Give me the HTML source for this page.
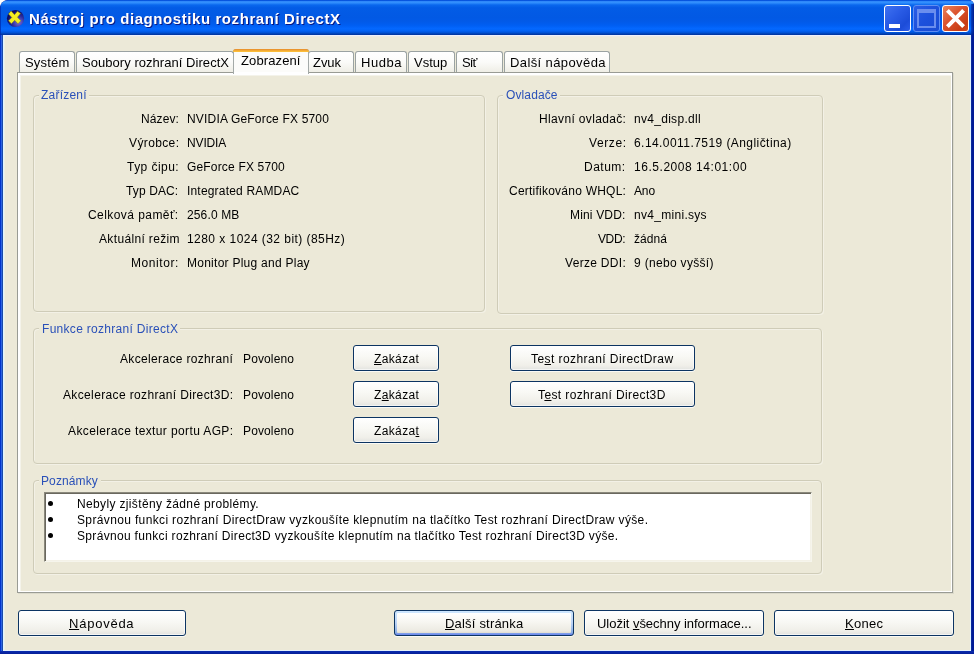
<!DOCTYPE html>
<html lang="cs"><head><meta charset="utf-8"><title>Nástroj pro diagnostiku rozhraní DirectX</title>
<style>
html,body{margin:0;padding:0;}
body{width:974px;height:654px;position:relative;overflow:hidden;background:#fff;font-family:"Liberation Sans",sans-serif;}
.a{position:absolute;box-sizing:border-box;}
.t{will-change:transform;position:absolute;white-space:pre;line-height:20px;height:20px;color:#000;font-family:"Liberation Sans",sans-serif;}
.t u{text-decoration:underline;text-underline-offset:1px;}
#win{left:0;top:0;width:974px;height:654px;background:#0a2aa8;border-radius:8px 5px 0 0;overflow:hidden;}
#title{left:0;top:0;width:974px;height:35px;border-radius:8px 5px 0 0;
background:linear-gradient(to bottom,#0046c8 0%,#0a5be8 2%,#3a96ff 5%,#2a88fb 9%,#0a68ee 14%,#035ce6 22%,#0259e4 50%,#025ae8 62%,#005ef2 72%,#0468ff 82%,#0262f4 88%,#0052d8 93%,#0040b0 97%,#00309a 100%);}
#client{left:3px;top:35px;width:968px;height:615px;background:#ece9d8;}
.btn{border:1px solid #0c3462;border-radius:3px;background:linear-gradient(to bottom,#ffffff 0%,#f8f8f4 45%,#f0efe9 82%,#e2e3e0 100%);box-shadow:inset 0 0 0 1px rgba(255,255,255,.6), 0 1px 0 rgba(255,255,255,.75);}
.btn.def{background:linear-gradient(to bottom,#cee7ff 0%,#bcd4f6 50%,#89ade4 90%,#6982ee 100%);box-shadow:0 1px 0 rgba(255,255,255,.75);}
.btn.def i{position:absolute;left:2px;top:2px;right:2px;bottom:2px;border-radius:1px;background:linear-gradient(to bottom,#ffffff 0%,#f7f6f1 45%,#eceae2 90%,#e0dcd2 100%);}
.grp{border:1px solid #cfccb8;border-radius:4px;box-shadow:inset 1px 1px 0 #f3f1e6, 1px 1px 0 #f3f1e6;}
.glm{background:#ece9d8;height:4px;}
.tab{border:1px solid #9aa2a2;border-bottom:none;border-radius:3px 3px 0 0;background:linear-gradient(to bottom,#ffffff 0%,#fbfbf9 50%,#efeee6 100%);}
.cap{border:1px solid #fff;border-radius:3px;}
</style></head><body>
<div id="win" class="a">
 <div id="title" class="a"></div>
  <!-- frame borders + inner highlight -->
 <div class="a" style="left:0;top:35px;width:3px;height:619px;background:linear-gradient(to right,#0033cc 0,#0033cc 1px,#2c62e2 1px,#2c62e2 2px,#1a4aa8 2px)"></div>
 <div class="a" style="left:971px;top:35px;width:3px;height:619px;background:linear-gradient(to right,#0a2a9c 0,#0a2a9c 1px,#001a98 1px)"></div>
 <div class="a" style="left:0;top:651px;width:974px;height:3px;background:linear-gradient(to bottom,#0a2cb0,#061e96)"></div>
 <div class="a" style="left:3px;top:35px;width:968px;height:616px;background:#ece9d8"></div>
 <div class="a" style="left:3px;top:35px;width:968px;height:1px;background:#eef0fb"></div>
 <div class="a" style="left:3px;top:36px;width:968px;height:1px;background:#ebe9e4"></div>
 <div class="a" style="left:3px;top:35px;width:1px;height:616px;background:#dff4ff"></div>
 <div class="a" style="left:4px;top:36px;width:1px;height:614px;background:#ecefe6"></div>
 <div class="a" style="left:970px;top:35px;width:1px;height:616px;background:#e0f2ff"></div>
 <div class="a" style="left:3px;top:650px;width:968px;height:1px;background:#e4f0fa"></div>
 <div class="a" style="left:971px;top:4px;width:3px;height:31px;background:linear-gradient(to right,rgba(0,40,160,.55),rgba(0,20,130,.9))"></div>
 <div class="a" style="left:0;top:6px;width:1px;height:29px;background:rgba(0,40,170,.7)"></div>
 <!-- title icon -->
 <svg class="a" style="left:6px;top:9px" width="19" height="19" viewBox="0 0 19 19">
  <defs><radialGradient id="ig" cx="68%" cy="72%" r="70%"><stop offset="0" stop-color="#7a6ee0"/><stop offset=".55" stop-color="#2a2a9a"/><stop offset="1" stop-color="#0a0a5e"/></radialGradient></defs>
  <circle cx="9.5" cy="9.5" r="8.6" fill="url(#ig)"/>
  <path d="M5.09 1.98 L8.53 5.67 L11.45 2.15 L14.55 4.62 L11.45 8.31 L14.89 11.66 L11.97 14.82 L8.70 11.30 L5.43 14.65 L2.51 11.83 L5.78 8.49 L2.51 4.97 Z" fill="#f4ee22" stroke="#77761c" stroke-width=".5"/>
 </svg>

 <!-- caption buttons -->
 <div class="a cap" style="left:884px;top:5px;width:27px;height:27px;background:linear-gradient(135deg,#3f72f0 0%,#2a5ce6 40%,#1c4cd8 75%,#2c5cea 100%)"></div>
 <div class="a" style="left:889px;top:24px;width:11px;height:4px;background:#fff"></div>
 <div class="a cap" style="left:913px;top:5px;width:27px;height:27px;border-color:#5f8ef2;background:linear-gradient(135deg,#2a5ee6 0%,#1c50dc 50%,#1a4cd4 100%)"></div>
 <div class="a" style="left:917px;top:9px;width:19px;height:19px;border:2px solid #6a8eee;border-top-width:4px;"></div>
 <div class="a cap" style="left:942px;top:5px;width:27px;height:27px;background:linear-gradient(135deg,#e8835c 0%,#dc5530 40%,#c83c14 80%,#d04a20 100%)"></div>
 <svg class="a" style="left:942px;top:5px" width="27" height="27" viewBox="0 0 27 27"><path d="M5.4 5.4 L21.6 21.6 M21.6 5.4 L5.4 21.6" stroke="#fff" stroke-width="4" stroke-linecap="butt"/></svg>

 <!-- tab pane -->
 <div class="a" style="left:17px;top:72px;width:936px;height:521px;border:1px solid #999b94;box-shadow:inset 2px 2px 0 #fff, inset -1px -1px 0 #fff, inset 3px 3px 0 #f4f3ea, 1px 1px 0 #dcdacb;"></div>
 <!-- tabs -->
 <div class="a tab" style="left:19px;top:51px;width:56px;height:21px"></div>
 <div class="a tab" style="left:76px;top:51px;width:158px;height:21px"></div>
 <div class="a tab" style="left:308px;top:51px;width:46px;height:21px"></div>
 <div class="a tab" style="left:355px;top:51px;width:52px;height:21px"></div>
 <div class="a tab" style="left:408px;top:51px;width:47px;height:21px"></div>
 <div class="a tab" style="left:456px;top:51px;width:47px;height:21px"></div>
 <div class="a tab" style="left:504px;top:51px;width:106px;height:21px"></div>
 <!-- active tab -->
 <div class="a" style="left:233px;top:49px;width:76px;height:25px;border:1px solid #a4aaa8;border-bottom:none;border-radius:3px 3px 0 0;background:linear-gradient(to bottom,#fcfcfa 0,#fcfcfa 22px,#ffffff 22px);"></div>
 <div class="a" style="left:233px;top:49px;width:76px;height:3px;border-radius:3px 3px 0 0;background:linear-gradient(to bottom,#e68b2c,#ffc73c);"></div>

 <!-- group boxes -->
 <div class="a grp" style="left:33px;top:95px;width:452px;height:217px"></div>
 <div class="a grp" style="left:497px;top:95px;width:326px;height:219px"></div>
 <div class="a grp" style="left:33px;top:328px;width:789px;height:136px"></div>
 <div class="a grp" style="left:33px;top:480px;width:789px;height:94px"></div>
 <div class="a glm" style="left:39px;top:94px;width:50px"></div>
 <div class="a glm" style="left:503px;top:94px;width:57px"></div>
 <div class="a glm" style="left:39px;top:327px;width:141px"></div>
 <div class="a glm" style="left:39px;top:479px;width:62px"></div>

 <!-- buttons in group 3 -->
 <div class="a btn" style="left:353px;top:345px;width:86px;height:26px"></div>
 <div class="a btn" style="left:353px;top:381px;width:86px;height:26px"></div>
 <div class="a btn" style="left:353px;top:417px;width:86px;height:26px"></div>
 <div class="a btn" style="left:510px;top:345px;width:185px;height:26px"></div>
 <div class="a btn" style="left:510px;top:381px;width:185px;height:26px"></div>

 <!-- notes box -->
 <div class="a" style="left:44px;top:492px;width:768px;height:70px;background:#fff;border:1px solid;border-color:#8a887c #f6f5ec #f6f5ec #8a887c;box-shadow:inset 1px 1px 0 #6a685e, inset -1px -1px 0 #f4f2e8;"></div>
 <div class="a" style="left:48px;top:501px;width:5px;height:5px;border-radius:50%;background:#000"></div>
 <div class="a" style="left:48px;top:517px;width:5px;height:5px;border-radius:50%;background:#000"></div>
 <div class="a" style="left:48px;top:533px;width:5px;height:5px;border-radius:50%;background:#000"></div>

 <!-- bottom buttons -->
 <div class="a btn" style="left:18px;top:610px;width:168px;height:26px"></div>
 <div class="a btn def" style="left:394px;top:610px;width:180px;height:26px"><i></i></div>
 <div class="a btn" style="left:584px;top:610px;width:180px;height:26px"></div>
 <div class="a btn" style="left:774px;top:610px;width:180px;height:26px"></div>

<div class="t" style="left:29.00px;top:9.00px;font-size:15px;letter-spacing:0.580px;font-weight:bold;color:#fff;text-shadow:1px 1px #0a1883;">Nástroj pro diagnostiku rozhraní DirectX</div>
<div class="t" style="left:25.00px;top:53.00px;font-size:13px;letter-spacing:0.181px;">Systém</div>
<div class="t" style="left:82.00px;top:53.00px;font-size:13px;letter-spacing:0.046px;">Soubory rozhraní DirectX</div>
<div class="t" style="left:241.25px;top:51.00px;font-size:13px;letter-spacing:0.119px;">Zobrazení</div>
<div class="t" style="left:313.25px;top:53.00px;font-size:13px;letter-spacing:-0.057px;">Zvuk</div>
<div class="t" style="left:361.00px;top:53.00px;font-size:13px;letter-spacing:0.547px;">Hudba</div>
<div class="t" style="left:413.75px;top:53.00px;font-size:13px;letter-spacing:0.000px;">Vstup</div>
<div class="t" style="left:462.00px;top:53.00px;font-size:13px;letter-spacing:-0.836px;">Síť</div>
<div class="t" style="left:510.00px;top:53.00px;font-size:13px;letter-spacing:0.397px;">Další nápověda</div>
<div class="t" style="left:41.25px;top:85.00px;font-size:12px;letter-spacing:0.212px;color:#2a50b8;">Zařízení</div>
<div class="t" style="left:505.50px;top:85.00px;font-size:12px;letter-spacing:0.114px;color:#2a50b8;">Ovladače</div>
<div class="t" style="left:41.50px;top:319.00px;font-size:12px;letter-spacing:0.296px;color:#2a50b8;">Funkce rozhraní DirectX</div>
<div class="t" style="left:41.40px;top:471.00px;font-size:12px;letter-spacing:0.110px;color:#2a50b8;">Poznámky</div>
<div class="t" style="left:140.60px;top:109.00px;font-size:12px;letter-spacing:0.108px;">Název:</div>
<div class="t" style="left:186.70px;top:109.00px;font-size:12px;letter-spacing:0.183px;">NVIDIA GeForce FX 5700</div>
<div class="t" style="left:128.50px;top:133.00px;font-size:12px;letter-spacing:0.377px;">Výrobce:</div>
<div class="t" style="left:186.70px;top:133.00px;font-size:12px;letter-spacing:-0.143px;">NVIDIA</div>
<div class="t" style="left:126.80px;top:157.00px;font-size:12px;letter-spacing:0.459px;">Typ čipu:</div>
<div class="t" style="left:186.70px;top:157.00px;font-size:12px;letter-spacing:0.172px;">GeForce FX 5700</div>
<div class="t" style="left:126.30px;top:181.00px;font-size:12px;letter-spacing:0.120px;">Typ DAC:</div>
<div class="t" style="left:186.70px;top:181.00px;font-size:12px;letter-spacing:0.182px;">Integrated RAMDAC</div>
<div class="t" style="left:88.30px;top:205.00px;font-size:12px;letter-spacing:0.435px;">Celková paměť:</div>
<div class="t" style="left:186.70px;top:205.00px;font-size:12px;letter-spacing:0.132px;">256.0 MB</div>
<div class="t" style="left:98.80px;top:229.00px;font-size:12px;letter-spacing:0.351px;">Aktuální režim</div>
<div class="t" style="left:186.70px;top:229.00px;font-size:12px;letter-spacing:0.450px;">1280 x 1024 (32 bit) (85Hz)</div>
<div class="t" style="left:131.20px;top:253.00px;font-size:12px;letter-spacing:0.563px;">Monitor:</div>
<div class="t" style="left:186.70px;top:253.00px;font-size:12px;letter-spacing:0.260px;">Monitor Plug and Play</div>
<div class="t" style="left:538.70px;top:109.00px;font-size:12px;letter-spacing:0.347px;">Hlavní ovladač:</div>
<div class="t" style="left:633.90px;top:109.00px;font-size:12px;letter-spacing:0.293px;">nv4_disp.dll</div>
<div class="t" style="left:588.50px;top:133.00px;font-size:12px;letter-spacing:0.614px;">Verze:</div>
<div class="t" style="left:633.90px;top:133.00px;font-size:12px;letter-spacing:0.435px;">6.14.0011.7519 (Angličtina)</div>
<div class="t" style="left:584.40px;top:157.00px;font-size:12px;letter-spacing:0.503px;">Datum:</div>
<div class="t" style="left:633.90px;top:157.00px;font-size:12px;letter-spacing:0.539px;">16.5.2008 14:01:00</div>
<div class="t" style="left:508.70px;top:181.00px;font-size:12px;letter-spacing:0.233px;">Certifikováno WHQL:</div>
<div class="t" style="left:633.90px;top:181.00px;font-size:12px;letter-spacing:-0.130px;">Ano</div>
<div class="t" style="left:570.30px;top:205.00px;font-size:12px;letter-spacing:0.161px;">Mini VDD:</div>
<div class="t" style="left:633.90px;top:205.00px;font-size:12px;letter-spacing:0.295px;">nv4_mini.sys</div>
<div class="t" style="left:598.10px;top:229.00px;font-size:12px;letter-spacing:-0.391px;">VDD:</div>
<div class="t" style="left:633.90px;top:229.00px;font-size:12px;letter-spacing:0.074px;">žádná</div>
<div class="t" style="left:564.80px;top:253.00px;font-size:12px;letter-spacing:0.308px;">Verze DDI:</div>
<div class="t" style="left:633.90px;top:253.00px;font-size:12px;letter-spacing:0.317px;">9 (nebo vyšší)</div>
<div class="t" style="left:119.90px;top:349.00px;font-size:12px;letter-spacing:0.338px;">Akcelerace rozhraní</div>
<div class="t" style="left:242.50px;top:349.00px;font-size:12px;letter-spacing:0.122px;">Povoleno</div>
<div class="t" style="left:62.60px;top:385.00px;font-size:12px;letter-spacing:0.358px;">Akcelerace rozhraní Direct3D:</div>
<div class="t" style="left:242.50px;top:385.00px;font-size:12px;letter-spacing:0.122px;">Povoleno</div>
<div class="t" style="left:67.60px;top:421.00px;font-size:12px;letter-spacing:0.383px;">Akcelerace textur portu AGP:</div>
<div class="t" style="left:242.50px;top:421.00px;font-size:12px;letter-spacing:0.122px;">Povoleno</div>
<div class="t" style="left:373.50px;top:349.00px;font-size:12px;letter-spacing:0.366px;"><u>Z</u>akázat</div>
<div class="t" style="left:373.50px;top:385.00px;font-size:12px;letter-spacing:0.364px;">Z<u>a</u>kázat</div>
<div class="t" style="left:373.50px;top:421.00px;font-size:12px;letter-spacing:0.366px;">Zakáza<u>t</u></div>
<div class="t" style="left:530.80px;top:349.00px;font-size:12px;letter-spacing:0.436px;">Te<u>s</u>t rozhraní DirectDraw</div>
<div class="t" style="left:538.10px;top:385.00px;font-size:12px;letter-spacing:0.377px;">T<u>e</u>st rozhraní Direct3D</div>
<div class="t" style="left:76.50px;top:494.00px;font-size:12px;letter-spacing:0.350px;">Nebyly zjištěny žádné problémy.</div>
<div class="t" style="left:76.50px;top:510.00px;font-size:12px;letter-spacing:0.357px;">Správnou funkci rozhraní DirectDraw vyzkoušíte klepnutím na tlačítko Test rozhraní DirectDraw výše.</div>
<div class="t" style="left:76.50px;top:526.00px;font-size:12px;letter-spacing:0.324px;">Správnou funkci rozhraní Direct3D vyzkoušíte klepnutím na tlačítko Test rozhraní Direct3D výše.</div>
<div class="t" style="left:69.40px;top:614.00px;font-size:13px;letter-spacing:0.760px;"><u>N</u>ápověda</div>
<div class="t" style="left:445.10px;top:614.00px;font-size:13px;letter-spacing:0.194px;"><u>D</u>alší stránka</div>
<div class="t" style="left:597.10px;top:614.00px;font-size:13px;letter-spacing:-0.032px;">Uložit <u>v</u>šechny informace...</div>
<div class="t" style="left:845.20px;top:614.00px;font-size:13px;letter-spacing:0.306px;"><u>K</u>onec</div>
</div>
</body></html>
